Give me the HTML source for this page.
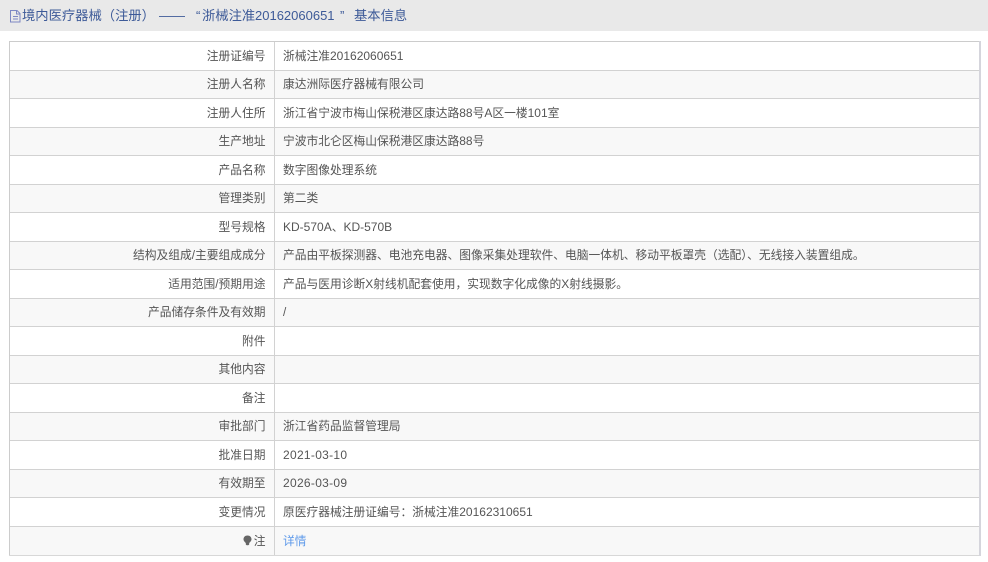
<!DOCTYPE html>
<html><head><meta charset="utf-8">
<style>
html,body{margin:0;padding:0;width:988px;height:562px;overflow:hidden;background:#fff;font-family:"Liberation Sans","Noto Sans CJK SC",sans-serif;color:#555;}
.hd{position:absolute;left:0;top:0;width:988px;height:31px;background:#e9e9e9;color:#3d5a98;font-size:13.3px;line-height:31px;white-space:nowrap;}
.hd svg{position:absolute;left:10px;top:10px;}
.hd span{position:absolute;top:0;}
.hd span.n{font-size:13px;}
.r{position:absolute;left:10px;width:969px;font-size:11.75px;line-height:28px;white-space:nowrap;border-top:1px solid #d2d2d2;box-sizing:border-box;}
.r.e{background:#f8f8f8;line-height:26px;}
.r i{font-style:normal;font-size:12px;}
.r i.t{letter-spacing:.3px;}
.l,.v{position:absolute;top:0;}
.l::before,.v::before{content:"\200b";font-size:12px;}
.l{left:0;width:255.500px;text-align:right;}
.v{left:273px;}
.d{position:absolute;left:274px;top:42px;width:1px;height:513px;background:#d2d2d2;}
.lb{position:absolute;left:9px;top:41px;width:1px;height:515px;background:#ccc;}
.tp{position:absolute;left:9px;top:41px;width:972px;height:1px;background:#ccc;}
.bt{position:absolute;left:9px;top:555px;width:972px;height:1px;background:#d8d8d8;}
.sb{position:absolute;left:979px;top:41px;width:2px;height:515px;background:#d5d5dc;}
a{color:#5b98ea;text-decoration:none;}
.bulb{position:absolute;left:233px;top:8px;}
</style></head><body>
<div class="hd"><svg width="11" height="13" viewBox="0 0 11 13" fill="none" stroke="#7d88c4" stroke-width="1"><path d="M.5.5H7L10 3.500V12H.5Z M6.500.5V4H10 M3 6.500H8 M3 9H8"/></svg><span style="left:22px">境内医疗器械（注册）</span><span class="n" style="left:159px">——</span><span style="left:196px;font-size:13px">“</span><span style="left:202px">浙械注准</span><span class="n" style="left:255px">20162060651</span><span style="left:340px;font-size:13px">”</span><span style="left:354px">基本信息</span></div>
<div class="r" style="top:41px;height:29px"><div class="l">注册证编号</div><div class="v">浙械注准<i>20162060651</i></div></div>
<div class="r e" style="top:70px;height:28px"><div class="l">注册人名称</div><div class="v">康达洲际医疗器械有限公司</div></div>
<div class="r" style="top:98px;height:29px"><div class="l">注册人住所</div><div class="v">浙江省宁波市梅山保税港区康达路<i>88</i>号<i>A</i>区一楼<i>101</i>室</div></div>
<div class="r e" style="top:127px;height:28px"><div class="l">生产地址</div><div class="v">宁波市北仑区梅山保税港区康达路<i>88</i>号</div></div>
<div class="r" style="top:155px;height:29px"><div class="l">产品名称</div><div class="v">数字图像处理系统</div></div>
<div class="r e" style="top:184px;height:28px"><div class="l">管理类别</div><div class="v">第二类</div></div>
<div class="r" style="top:212px;height:29px"><div class="l">型号规格</div><div class="v"><i>KD-570A</i>、<i>KD-570B</i></div></div>
<div class="r e" style="top:241px;height:28px"><div class="l">结构及组成/主要组成成分</div><div class="v">产品由平板探测器、电池充电器、图像采集处理软件、电脑一体机、移动平板罩壳（选配）、无线接入装置组成。</div></div>
<div class="r" style="top:269px;height:29px"><div class="l">适用范围/预期用途</div><div class="v">产品与医用诊断<i>X</i>射线机配套使用，实现数字化成像的<i>X</i>射线摄影。</div></div>
<div class="r e" style="top:298px;height:28px"><div class="l">产品储存条件及有效期</div><div class="v">/</div></div>
<div class="r" style="top:326px;height:29px"><div class="l">附件</div></div>
<div class="r e" style="top:355px;height:28px"><div class="l">其他内容</div></div>
<div class="r" style="top:383px;height:29px"><div class="l">备注</div></div>
<div class="r e" style="top:412px;height:28px"><div class="l">审批部门</div><div class="v">浙江省药品监督管理局</div></div>
<div class="r" style="top:440px;height:29px"><div class="l">批准日期</div><div class="v"><i class="t">2021-03-10</i></div></div>
<div class="r e" style="top:469px;height:28px"><div class="l">有效期至</div><div class="v"><i class="t">2026-03-09</i></div></div>
<div class="r" style="top:497px;height:29px"><div class="l">变更情况</div><div class="v">原医疗器械注册证编号：浙械注准<i>20162310651</i></div></div>
<div class="r e" style="top:526px;height:29px;line-height:28px"><svg class="bulb" width="9" height="11" viewBox="0 0 9 11"><path d="M4.500.5C2 .5.500 2.200.500 4.300C.500 6 1.800 7 2.800 8V9.500C3.500 10.500 5.500 10.500 6.200 9.500V8C7.200 7 8.500 6 8.500 4.300C8.500 2.200 7 .5 4.500.5Z" fill="#666"/></svg><div class="l">注</div><div class="v"><a>详情</a></div></div>
<div class="d"></div><div class="lb"></div><div class="tp"></div><div class="bt"></div><div class="sb"></div>
</body></html>
